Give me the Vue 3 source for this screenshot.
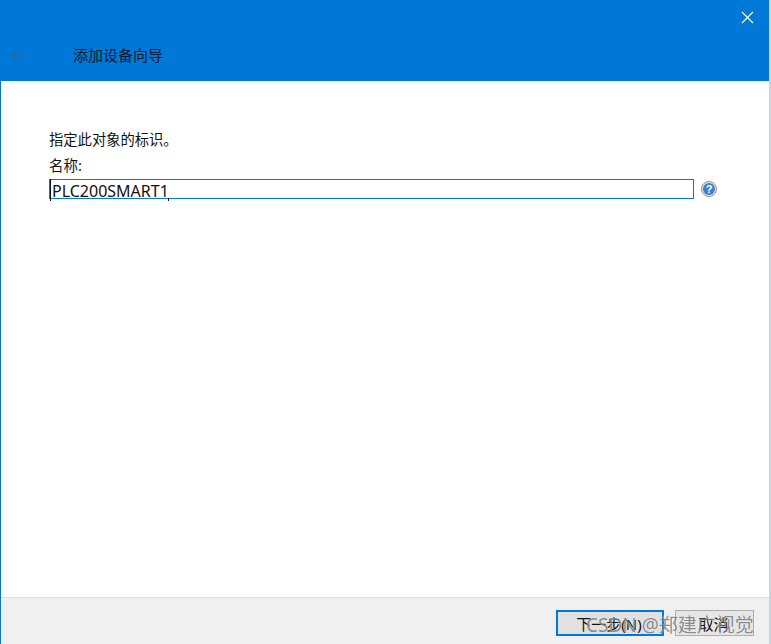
<script setup>
const title = '添加设备向导'
</script>

<template>
  <div class="win">
    <header class="head">
      <div class="close-row">
        <svg class="close" width="13" height="13" viewBox="0 0 13 13"><path d="M1 1L12 12M12 1L1 12" stroke="#fff" stroke-width="1.1" fill="none"/></svg>
      </div>
      <div class="title-row">
        <svg class="back" width="16" height="12" viewBox="0 0 16 12"><path d="M15.5 6H1M6 1L1 6L6 11" stroke="#2f659f" stroke-width="1.5" fill="none"/></svg>
        <span class="title">{{ title }}</span>
      </div>
    </header>
    <main class="body">
      <p class="hint">指定此对象的标识。</p>
      <label class="label">名称:</label>
      <div class="input-row">
        <div class="input">
          <span class="caret"></span>
          <span class="value">PLC200SMART1</span>
          <span class="tick"></span>
        </div>
        <svg class="help" width="16" height="16" viewBox="0 0 16 16">
          <circle cx="8" cy="8" r="7.5" fill="#e4e8ee" stroke="#8d9299" stroke-width="1"/>
          <circle cx="8" cy="8" r="6" fill="#3d7fcb"/>
          <text x="8" y="11.6" text-anchor="middle" class="q">?</text>
        </svg>
      </div>
    </main>
    <footer class="foot">
      <button class="btn primary">下一步(N)</button>
      <button class="btn ghost">取消</button>
    </footer>
    <div class="mark">CSDN @郑建广视觉</div>
  </div>
</template>

<style scoped>
.win {
  position: relative;
  box-sizing: border-box;
  width: 771px;
  height: 644px;
  display: flex;
  flex-direction: column;
  background: #fff;
  border-left: 1px solid #0078d7;
  border-right: 2px solid #c9d6e2;
  font-family: "Noto Sans", "Noto Sans CJK SC", sans-serif;
  color: #111;
  overflow: hidden;
}
.head {
  height: 81px;
  margin-left: -1px;
  margin-right: -2px;
  background: #0078d7;
  display: flex;
  flex-direction: column;
  flex: none;
}
.close-row {
  height: 40px;
  display: flex;
  justify-content: flex-end;
  padding: 11px 17px 0 0;
  box-sizing: border-box;
}
.title-row {
  display: flex;
  align-items: center;
  height: 32px;
  padding-left: 11px;
}
.back { margin-right: 46px; }
.title { font-size: 15px; color: #0a1a2c; line-height: 30px; height: 32px; }
.body {
  flex: 1;
  padding: 49px 0 0 48px;
}
.hint { margin: 0; font-size: 14.3px; line-height: 20px; }
.label { display: block; margin-top: 5px; font-size: 14.5px; line-height: 20px; }
.input-row { display: flex; align-items: center; margin-top: 4px; }
.input {
  position: relative;
  box-sizing: border-box;
  width: 645px;
  height: 20px;
  border: 1px solid #0078d7;
  padding-left: 2px;
  line-height: 20px;
  font-size: 16px;
}
.value { position: relative; top: 1px; }
.caret { position: absolute; left: 0; top: -1px; width: 1px; height: 22px; background: #111; }
.tick { position: absolute; left: 118px; top: 18px; width: 1px; height: 3px; background: #111; }
.help { margin-left: 7px; }
.q { font: 700 11px "Liberation Sans", sans-serif; fill: #fff; }
.foot {
  flex: none;
  height: 47px;
  background: #f0f0f0;
  border-top: 1px solid #dfdfdf;
  box-sizing: border-box;
  display: flex;
  justify-content: flex-end;
  align-items: flex-start;
  gap: 11px;
  padding: 12px 15px 0 0;
}
.btn {
  box-sizing: border-box;
  height: 26px;
  font: 15px "Noto Sans", "Noto Sans CJK SC", sans-serif;
  color: #111;
  padding: 0 2px 0 0;
}
.primary { width: 108px; background: #e1e1e1; border: 2px solid #0078d7; }
.ghost { width: 79px; background: #e6e6e6; border: 1px solid #adadad; }
.mark {
  position: absolute;
  left: 585px;
  top: 611px;
  font-size: 19px;
  line-height: 28px;
  color: rgba(90, 90, 90, 0.7);
  text-shadow: 0 0 1px rgba(255, 255, 255, 0.7);
  white-space: nowrap;
  pointer-events: none;
}
</style>
